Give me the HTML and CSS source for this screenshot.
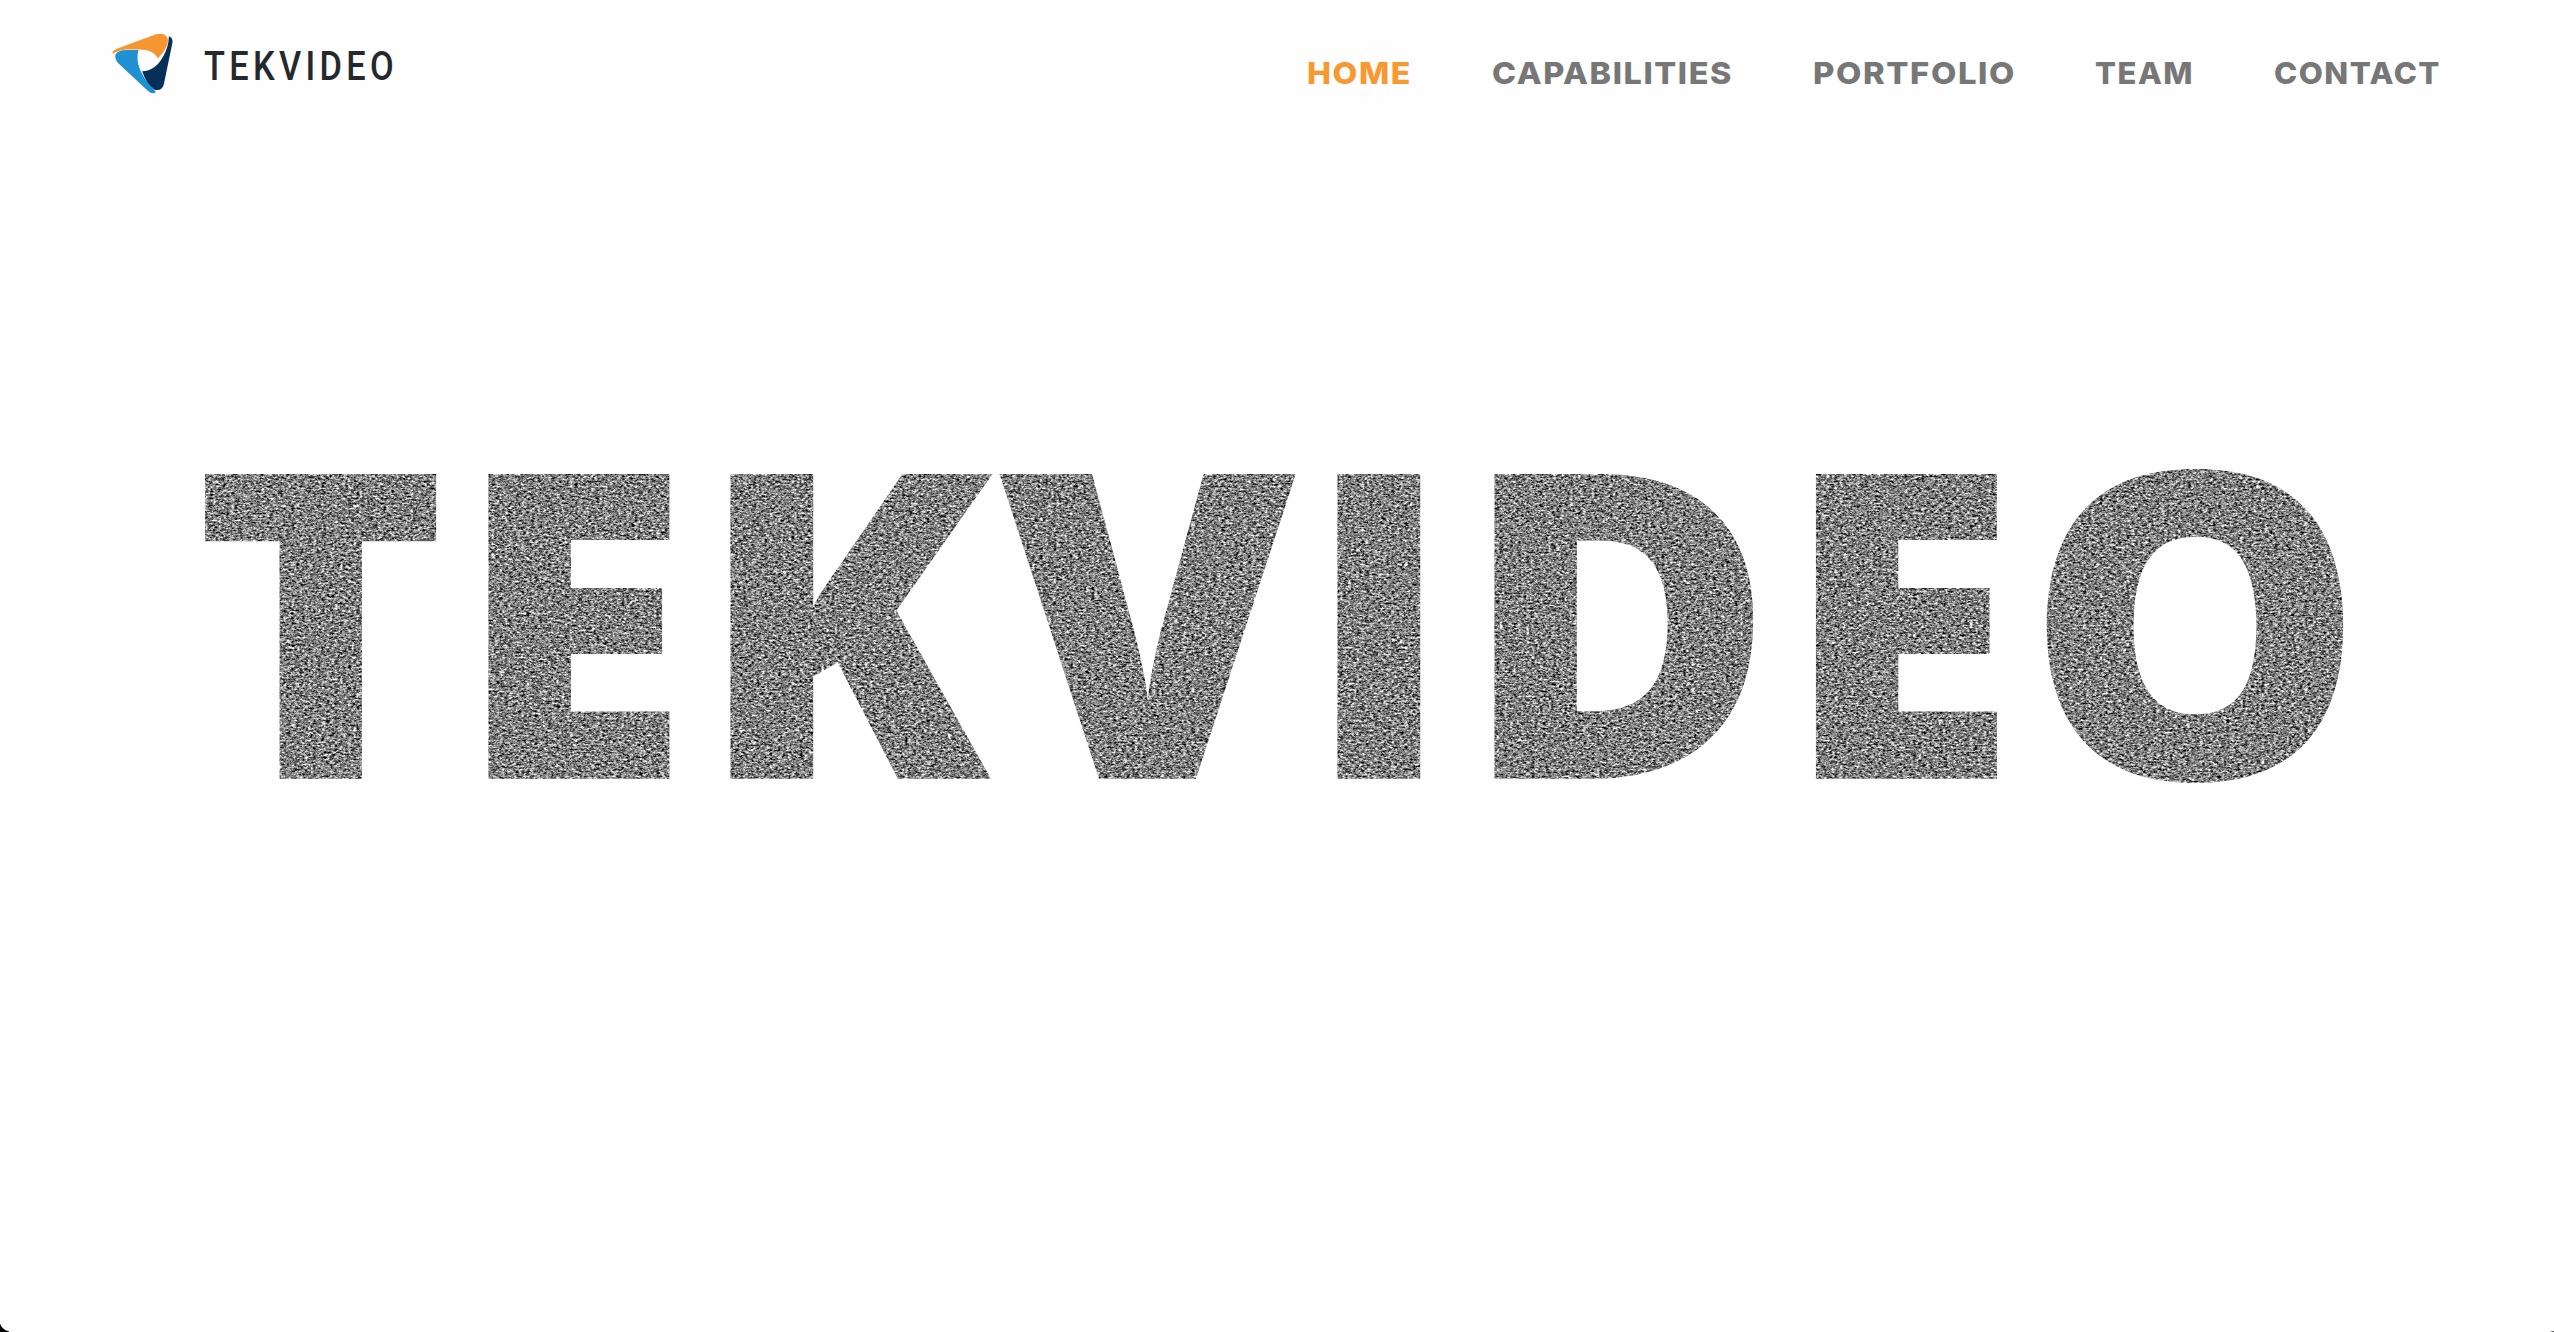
FILE: index.html
```html
<!DOCTYPE html>
<html lang="en">
<head>
<meta charset="utf-8">
<title>Tekvideo</title>
<link rel="stylesheet" href="styles.css">
</head>
<body>
<header class="header">
  <a class="brand">
    <svg class="brand-mark" viewBox="0 0 180 186" preserveAspectRatio="none">
      <path fill="#1f91d0" d="M10 66Q18 52 42 52H78Q71 82 82 110Q92 137 116 163Q137 183 122 184Q112 184 100 171L20 94Q7 79 10 66Z"/>
      <path fill="#f69632" d="M2 63Q-2 56 14 48L130 4Q154-3 164 15Q170 39 136 77Q122 49 78 50H42Q18 52 2 63Z"/>
      <path fill="#063057" d="M168 10Q181 15 178 31L153 156Q147 178 126 173Q101 156 89 117Q128 116 151 72Q167 43 168 10Z"/>
    </svg>
    <svg class="brand-name" viewBox="0 0 187 40"><text x="-1" y="35" textLength="194" lengthAdjust="spacingAndGlyphs">TEKVIDEO</text></svg>
  </a>
  <nav class="nav">
    <a class="active"><svg width="102" height="40"><text x="-2" y="31" textLength="105" lengthAdjust="spacingAndGlyphs">HOME</text></svg></a>
    <a><svg width="238" height="40"><text x="-2" y="31" textLength="241" lengthAdjust="spacingAndGlyphs">CAPABILITIES</text></svg></a>
    <a><svg width="199" height="40"><text x="-2" y="31" textLength="203" lengthAdjust="spacingAndGlyphs">PORTFOLIO</text></svg></a>
    <a><svg width="95" height="40"><text x="-2" y="31" textLength="99" lengthAdjust="spacingAndGlyphs">TEAM</text></svg></a>
    <a><svg width="164" height="40"><text x="-1" y="31" textLength="167" lengthAdjust="spacingAndGlyphs">CONTACT</text></svg></a>
  </nav>
</header>
<main class="hero">
  <svg class="wordmark" viewBox="0 0 2554 420">
    <filter id="static" filterUnits="userSpaceOnUse" x="0" y="0" width="2554" height="420" color-interpolation-filters="sRGB">
      <feTurbulence type="fractalNoise" baseFrequency="0.37 0.59" numOctaves="4" seed="7" result="fine"/>
      <feTurbulence type="fractalNoise" baseFrequency="0.23 0.41" numOctaves="4" seed="31" result="coarse"/>
      <feComposite in="fine" in2="coarse" operator="arithmetic" k2="0.55" k3="0.45"/>
      <feColorMatrix values="2 1.2 0 0 -1.1  2 1.2 0 0 -1.1  2 1.2 0 0 -1.1  0 0 0 0 1"/>
      <feComposite in2="SourceAlpha" operator="in"/>
    </filter>
    <text filter="url(#static)" x="194.5 455.5 697.5 999.5 1304.5 1461.5 1783 2025" y="358.7">TEKVIDEO</text>
  </svg>
</main>
<i class="corner corner-left"></i>
<i class="corner corner-right"></i>
</body>
</html>
```
FILE: styles.css
```css
body {
  margin: 0;
  height: 1332px;
  overflow: hidden;
  background: #fefefe;
  position: relative;
}
svg { display: block; overflow: visible; }
.header {
  display: flex;
  justify-content: space-between;
  align-items: flex-start;
  height: 120px;
  padding: 33px 115px 0 112px;
  box-sizing: border-box;
}
.brand { display: flex; gap: 32px; }
.brand-mark { width: 61px; height: 61px; }
.brand-name {
  width: 187px;
  height: 40px;
  margin-top: 12px;
  font: 500 40px Roboto, sans-serif;
  letter-spacing: 5px;
  fill: #25292e;
}
.nav {
  display: flex;
  gap: 83px;
  padding-top: 20px;
  font: 800 30.5px Inter, sans-serif;
  letter-spacing: 1.5px;
  fill: #777;
}
.nav .active { fill: #f79831; }
.hero { padding-top: 300px; }
.wordmark {
  width: 2554px;
  height: 420px;
  font: 800 427px "Open Sans", sans-serif;
}
.corner { position: absolute; bottom: 0; }
.corner-left {
  left: 0;
  width: 9px;
  height: 11px;
  background: radial-gradient(circle at 11px -1px, transparent 11px, #000 12px);
}
.corner-right {
  right: 0;
  width: 4px;
  height: 1px;
  background: linear-gradient(90deg, #ddd, #444);
}
```
